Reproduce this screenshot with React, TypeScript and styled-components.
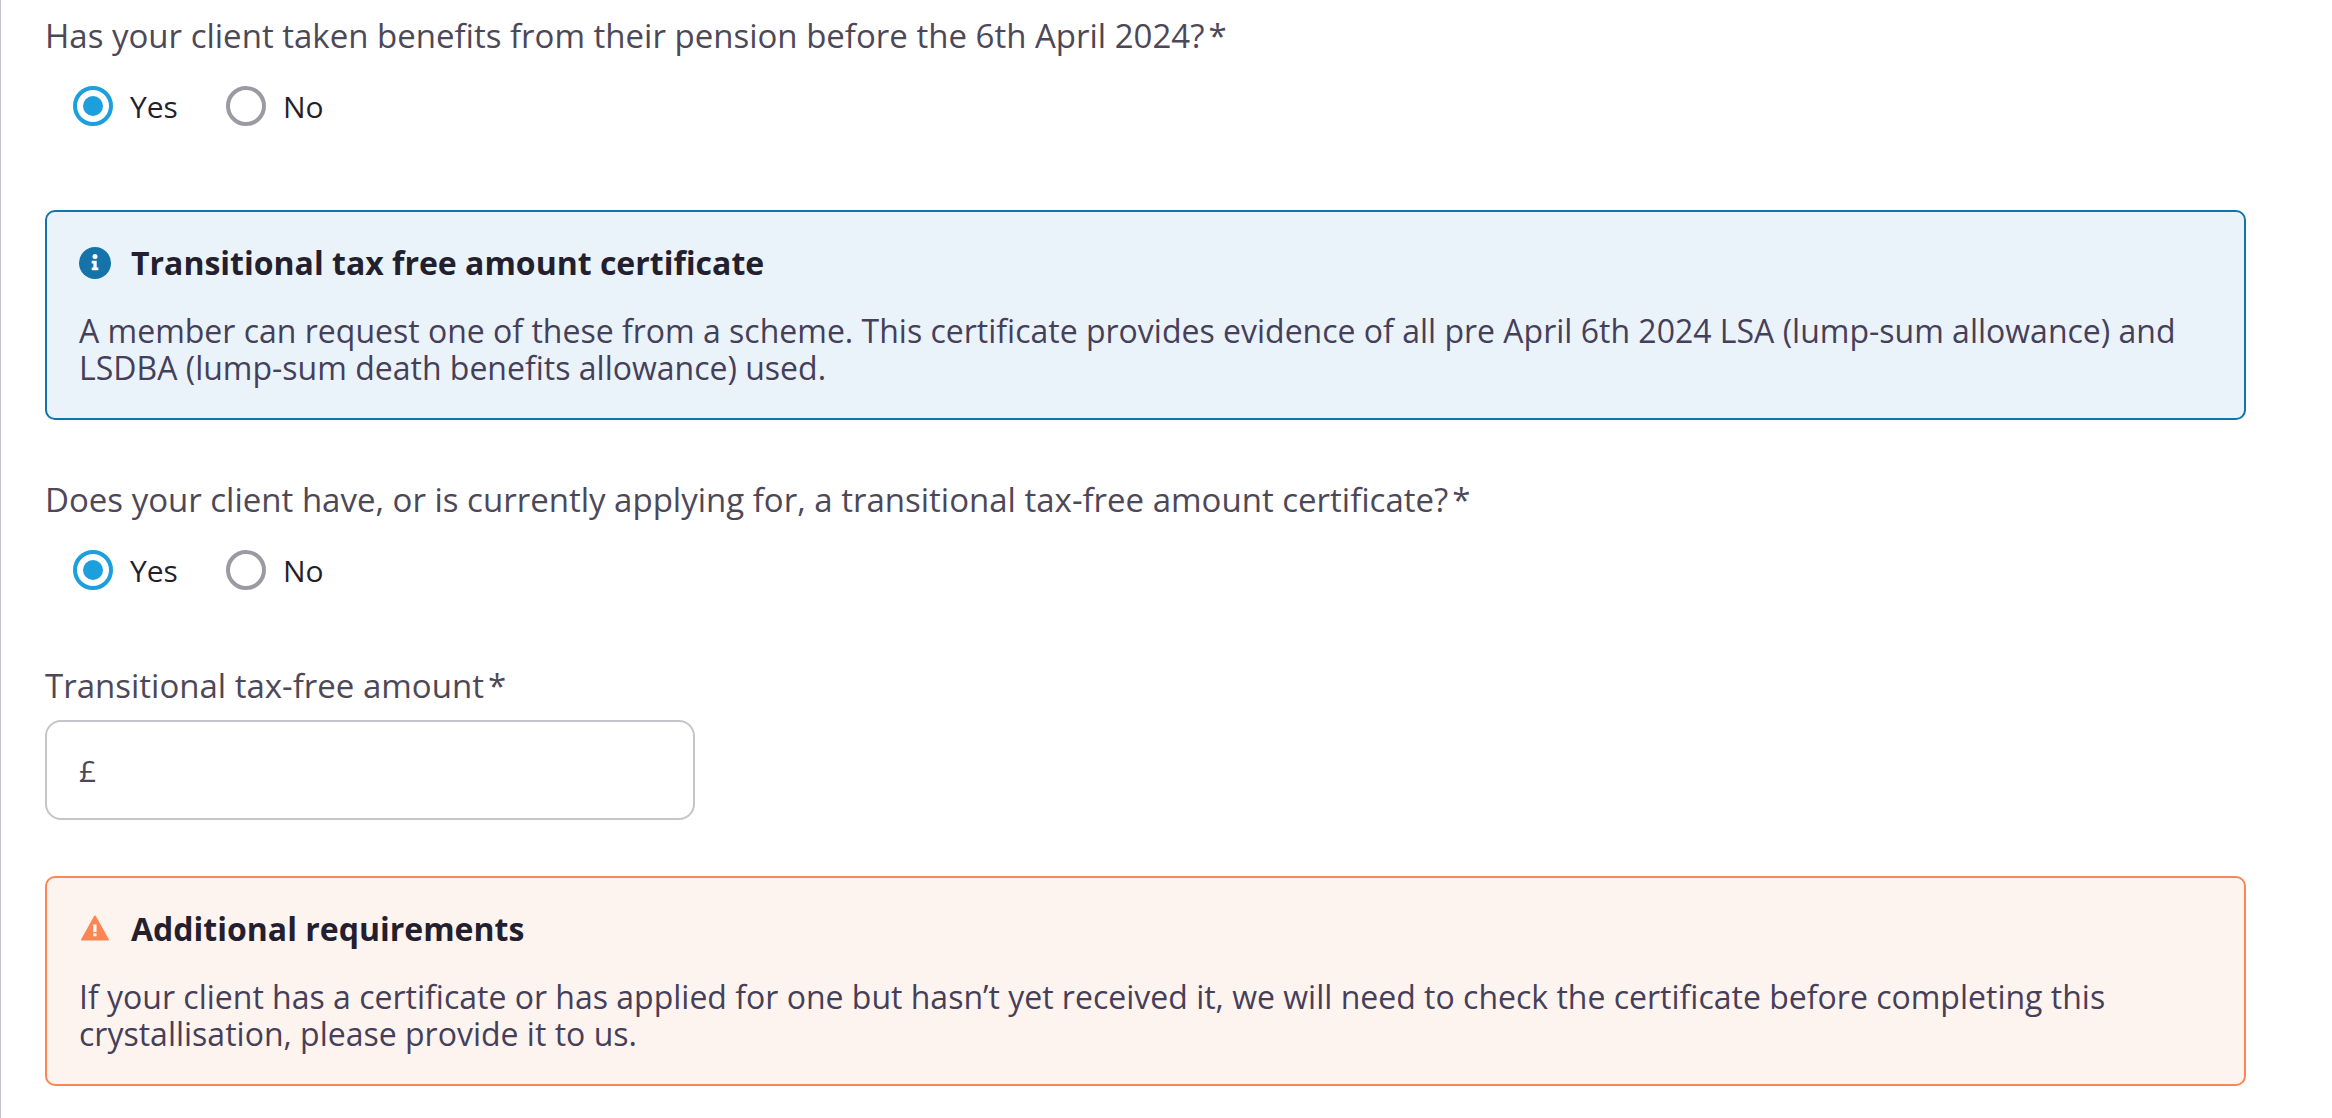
import React, { useId, useState } from "react";
import styled, { createGlobalStyle } from "styled-components";

const colors = {
  heading: "#241f2e",
  label: "#4d4858",
  body: "#463f59",
  rule: "#c5c4ca",
  radio: "#9d99a3",
  active: "#1b9fdd",
};

const tones = {
  info: { line: "#1473a8", fill: "#eaf3fa" },
  warning: { line: "#fc8653", fill: "#fef4ef" },
};

type Tone = keyof typeof tones;

const GlobalStyle = createGlobalStyle`
  *, *::before, *::after { box-sizing: border-box; }
  body {
    margin: 0;
    background: #fff;
    font-family: "Open Sans", "Liberation Sans", sans-serif;
    font-size: 32px;
    line-height: 37px;
  }
`;

const Page = styled.main`
  min-height: 100vh;
  padding: 17px 86px 32px 44px;
  border-left: 1px solid ${colors.rule};
`;

const Form = styled.form`
  display: flex;
  flex-direction: column;
`;

const Question = styled.fieldset`
  min-width: 0;
  margin: 0;
  padding: 0;
  border: 0;
`;

const Legend = styled.legend`
  padding: 0;
  margin-bottom: 32px;
  color: ${colors.label};
  font-size: 33px;
`;

const Required = styled.span`
  margin-left: 4px;
`;

const Options = styled.div`
  display: flex;
  gap: 48px;
  padding-left: 28px;
`;

const Option = styled.label`
  display: flex;
  align-items: center;
  gap: 17px;
  color: ${colors.heading};
  font-size: 30px;
`;

const Radio = styled.input`
  appearance: none;
  display: grid;
  place-items: center;
  width: 40px;
  height: 40px;
  margin: 0;
  border: 4px solid ${colors.radio};
  border-radius: 50%;
  background: #fff;

  &:checked {
    border-color: ${colors.active};
  }

  &:checked::before {
    content: "";
    width: 20px;
    height: 20px;
    border-radius: 50%;
    background: ${colors.active};
  }
`;

const Notice = styled.section<{ $tone: Tone }>`
  padding: 32px;
  border: 2px solid ${(p) => tones[p.$tone].line};
  border-radius: 10px;
  background: ${(p) => tones[p.$tone].fill};
`;

const InfoNotice = styled(Notice)`
  margin: 84px 0 61px;
`;

const WarningNotice = styled(Notice)`
  margin-top: 56px;
`;

const NoticeHeader = styled.div`
  display: flex;
  align-items: center;
  gap: 20px;
`;

const NoticeIcon = styled.svg`
  flex: none;
  width: 32px;
  height: 32px;
`;

const NoticeTitle = styled.h2`
  margin: 0;
  color: ${colors.heading};
  font-size: inherit;
  font-weight: 700;
`;

const NoticeText = styled.p`
  margin: 31px 0 0;
  color: ${colors.body};
`;

const Field = styled.div`
  display: flex;
  flex-direction: column;
  gap: 16px;
  margin-top: 77px;
`;

const FieldLabel = styled.label`
  color: ${colors.label};
  font-size: 33px;
`;

const AmountBox = styled.div`
  display: flex;
  align-items: center;
  gap: 12px;
  width: 100%;
  max-width: 650px;
  height: 100px;
  padding: 0 32px;
  border: 2px solid ${colors.rule};
  border-radius: 16px;
  color: ${colors.label};
  font-size: 30px;
`;

const AmountInput = styled.input`
  flex: 1;
  min-width: 0;
  padding: 0;
  border: 0;
  outline: 0;
  background: transparent;
  color: inherit;
  font: inherit;
`;

function InfoIcon() {
  return (
    <NoticeIcon viewBox="0 0 32 32" aria-hidden="true">
      <circle cx="16" cy="16" r="16" fill={tones.info.line} />
      <circle cx="16" cy="9.6" r="2.5" fill="#fff" />
      <path d="M12.7 13.800h5v6.600h1.700v2.800h-6.700v-2.800h1.700v-3.900h-1.700z" fill="#fff" />
    </NoticeIcon>
  );
}

function WarningIcon() {
  return (
    <NoticeIcon viewBox="0 0 32 32" aria-hidden="true">
      <path
        d="M15 3.200c.5-1 1.500-1 2 0l12.800 23c.4.800.1 1.300-.7 1.300H2.900c-.8 0-1.100-.5-.7-1.300z"
        fill={tones.warning.line}
      />
      <path d="M14.300 11.500h3.200v7.500h-3.200zM14.300 20.200h3.200v3h-3.200z" fill="#fff" />
    </NoticeIcon>
  );
}

function YesNoQuestion({ children }: { children: React.ReactNode }) {
  const name = useId();
  const [value, setValue] = useState("Yes");
  return (
    <Question>
      <Legend>
        {children}
        <Required>*</Required>
      </Legend>
      <Options>
        {["Yes", "No"].map((option) => (
          <Option key={option}>
            <Radio
              type="radio"
              name={name}
              value={option}
              checked={value === option}
              onChange={() => setValue(option)}
            />
            {option}
          </Option>
        ))}
      </Options>
    </Question>
  );
}

export default function App() {
  const [amount, setAmount] = useState("");
  return (
    <>
      <GlobalStyle />
      <Page>
        <Form>
          <YesNoQuestion>
            Has your client taken benefits from their pension before the 6th April 2024?
          </YesNoQuestion>

          <InfoNotice $tone="info">
            <NoticeHeader>
              <InfoIcon />
              <NoticeTitle>Transitional tax free amount certificate</NoticeTitle>
            </NoticeHeader>
            <NoticeText>
              A member can request one of these from a scheme. This certificate provides evidence of
              all pre April 6th 2024 LSA (lump-sum allowance) and LSDBA (lump-sum death benefits
              allowance) used.
            </NoticeText>
          </InfoNotice>

          <YesNoQuestion>
            Does your client have, or is currently applying for, a transitional tax-free amount
            certificate?
          </YesNoQuestion>

          <Field>
            <FieldLabel htmlFor="tax-free-amount">
              Transitional tax-free amount
              <Required>*</Required>
            </FieldLabel>
            <AmountBox>
              <span>£</span>
              <AmountInput
                id="tax-free-amount"
                type="text"
                inputMode="decimal"
                value={amount}
                onChange={(e) => setAmount(e.target.value)}
              />
            </AmountBox>
          </Field>

          <WarningNotice $tone="warning">
            <NoticeHeader>
              <WarningIcon />
              <NoticeTitle>Additional requirements</NoticeTitle>
            </NoticeHeader>
            <NoticeText>
              If your client has a certificate or has applied for one but hasn’t yet received it, we
              will need to check the certificate before completing this crystallisation, please
              provide it to us.
            </NoticeText>
          </WarningNotice>
        </Form>
      </Page>
    </>
  );
}
